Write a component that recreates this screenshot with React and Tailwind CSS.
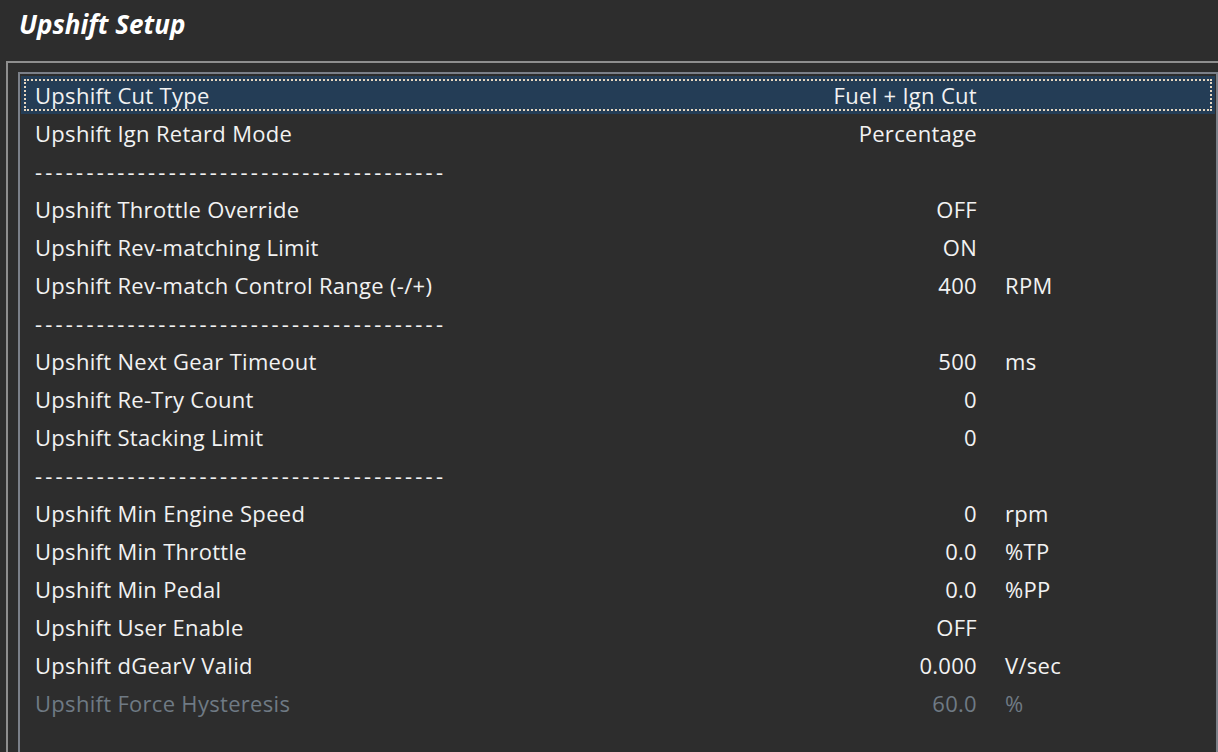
const rows = [
  { label: "Upshift Cut Type", value: "Fuel + Ign Cut", selected: true },
  { label: "Upshift Ign Retard Mode", value: "Percentage" },
  { dash: true },
  { label: "Upshift Throttle Override", value: "OFF" },
  { label: "Upshift Rev-matching Limit", value: "ON" },
  { label: "Upshift Rev-match Control Range (-/+)", value: "400", unit: "RPM" },
  { dash: true },
  { label: "Upshift Next Gear Timeout", value: "500", unit: "ms" },
  { label: "Upshift Re-Try Count", value: "0" },
  { label: "Upshift Stacking Limit", value: "0" },
  { dash: true },
  { label: "Upshift Min Engine Speed", value: "0", unit: "rpm" },
  { label: "Upshift Min Throttle", value: "0.0", unit: "%TP" },
  { label: "Upshift Min Pedal", value: "0.0", unit: "%PP" },
  { label: "Upshift User Enable", value: "OFF" },
  { label: "Upshift dGearV Valid", value: "0.000", unit: "V/sec" },
  { label: "Upshift Force Hysteresis", value: "60.0", unit: "%", disabled: true },
];

function Row({ row }) {
  if (row.dash) {
    return (
      <div className="flex h-[38px] items-center pl-[14px] tracking-[3.2px] text-[#f2f2f2]">
        {"-".repeat(40)}
      </div>
    );
  }
  return (
    <div
      className={`flex h-[38px] items-center pl-[14px] tracking-[0.3px] ${
        row.selected
          ? "bg-[#243d56] outline-2 outline-dotted outline-[#e6d6bf] outline-offset-[-5px]"
          : ""
      } ${row.disabled ? "text-[#6f7a84]" : "text-[#f2f2f2]"}`}
    >
      <span className="flex-1 whitespace-nowrap">{row.label}</span>
      <span className="whitespace-nowrap text-right">{row.value}</span>
      <span className="w-[238px] whitespace-nowrap pl-[28px]">{row.unit || ""}</span>
    </div>
  );
}

export default function App() {
  return (
    <div
      className="h-[752px] w-[1218px] overflow-hidden bg-[#2d2d2d]"
      style={{ fontFamily: '"Open Sans", "Noto Sans", sans-serif' }}
    >
      <div className="flex h-[48px] items-center pl-[19px] text-[26px] font-bold italic text-white">
        Upshift Setup
      </div>
      <div className="ml-[6px] mt-[13px] h-[800px] w-[1240px] border-l-2 border-t-2 border-[#8e8e8e] pl-[10px] pt-[9px]">
        <div className="h-[800px] w-[1200px] border-l-2 border-r-2 border-t-2 border-[#7b8089] pl-[1px] pt-[2px] pr-[1px]">
          <div className="text-[22px] leading-none">
            {rows.map((row, i) => (
              <Row key={i} row={row} />
            ))}
          </div>
        </div>
      </div>
    </div>
  );
}
